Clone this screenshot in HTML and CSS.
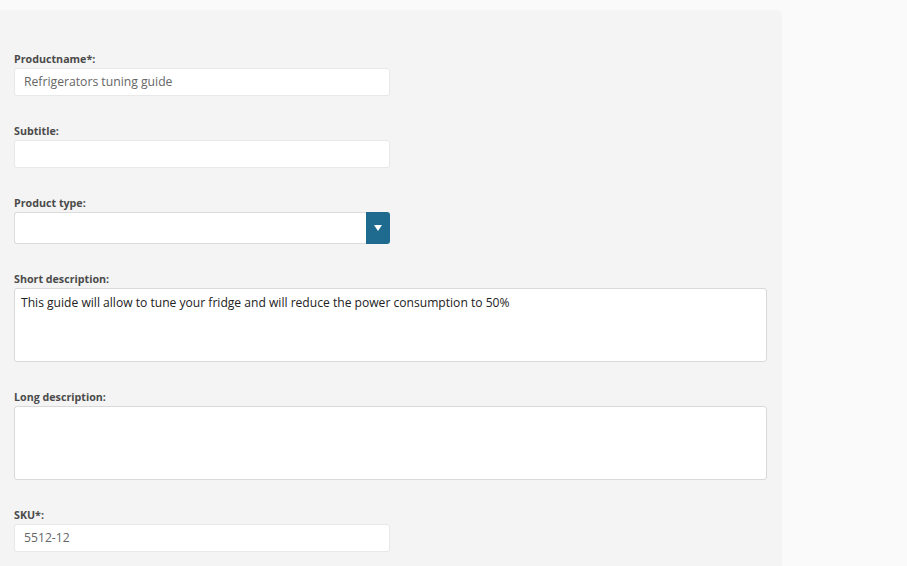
FILE: index.html
```html
<!DOCTYPE html>
<html>
<head>
<meta charset="utf-8">
<link rel="stylesheet" href="styles.css">
</head>
<body>
<div class="panel">
  <form class="form">
    <div class="field">
      <label class="label">Productname*:</label>
      <div class="input">Refrigerators tuning guide</div>
    </div>
    <div class="field">
      <label class="label">Subtitle:</label>
      <div class="input"></div>
    </div>
    <div class="field">
      <label class="label">Product type:</label>
      <div class="select">
        <div class="select-box"></div>
        <div class="select-btn">
          <svg width="8" height="6" viewBox="0 0 8 6"><path d="M0 0 H8 L4 6 Z" fill="#fff"/></svg>
        </div>
      </div>
    </div>
    <div class="field">
      <label class="label">Short description:</label>
      <div class="textarea">This guide will allow to tune your fridge and will reduce the power consumption to 50%</div>
    </div>
    <div class="field">
      <label class="label">Long description:</label>
      <div class="textarea"></div>
    </div>
    <div class="field">
      <label class="label">SKU*:</label>
      <div class="input">5512-12</div>
    </div>
  </form>
</div>
</body>
</html>
```

FILE: styles.css
```css
html, body {
  margin: 0;
  padding: 0;
}
body {
  background: #fafafa;
  font-family: "Open Sans", "Liberation Sans", sans-serif;
  height: 566px;
  overflow: hidden;
}
.panel {
  margin-top: 10px;
  width: 782px;
  height: 556px;
  overflow: hidden;
  background: #f4f4f4;
  border-top-right-radius: 6px;
  box-sizing: border-box;
  padding: 41px 0 0 14px;
}
.form {
  display: flex;
  flex-direction: column;
}
.field {
  display: flex;
  flex-direction: column;
  margin-bottom: 27px;
}
.label {
  display: block;
  font-size: 10.7px;
  font-weight: 700;
  line-height: 16px;
  color: #4b4b4b;
  margin-bottom: 1px;
}
.input {
  box-sizing: border-box;
  width: 376px;
  height: 28px;
  background: #fff;
  border: 1px solid #e8e8e8;
  border-radius: 3px;
  padding: 0 9px;
  font-size: 12.2px;
  line-height: 26px;
  color: #666;
}
.select {
  display: flex;
  width: 376px;
  height: 32px;
}
.select-box {
  flex: 1;
  box-sizing: border-box;
  background: #fff;
  border: 1px solid #dcdcdc;
  border-right: none;
  border-radius: 3px 0 0 3px;
}
.select-btn {
  width: 24px;
  background: #1e6b8f;
  border-radius: 0 3px 3px 0;
  display: flex;
  align-items: center;
  justify-content: center;
}
.textarea {
  box-sizing: border-box;
  width: 753px;
  height: 74px;
  background: #fff;
  border: 1px solid #d9d9d9;
  border-radius: 3px;
  padding: 6px 6px;
  font-size: 12.1px;
  line-height: 16px;
  color: #222;
}
```
